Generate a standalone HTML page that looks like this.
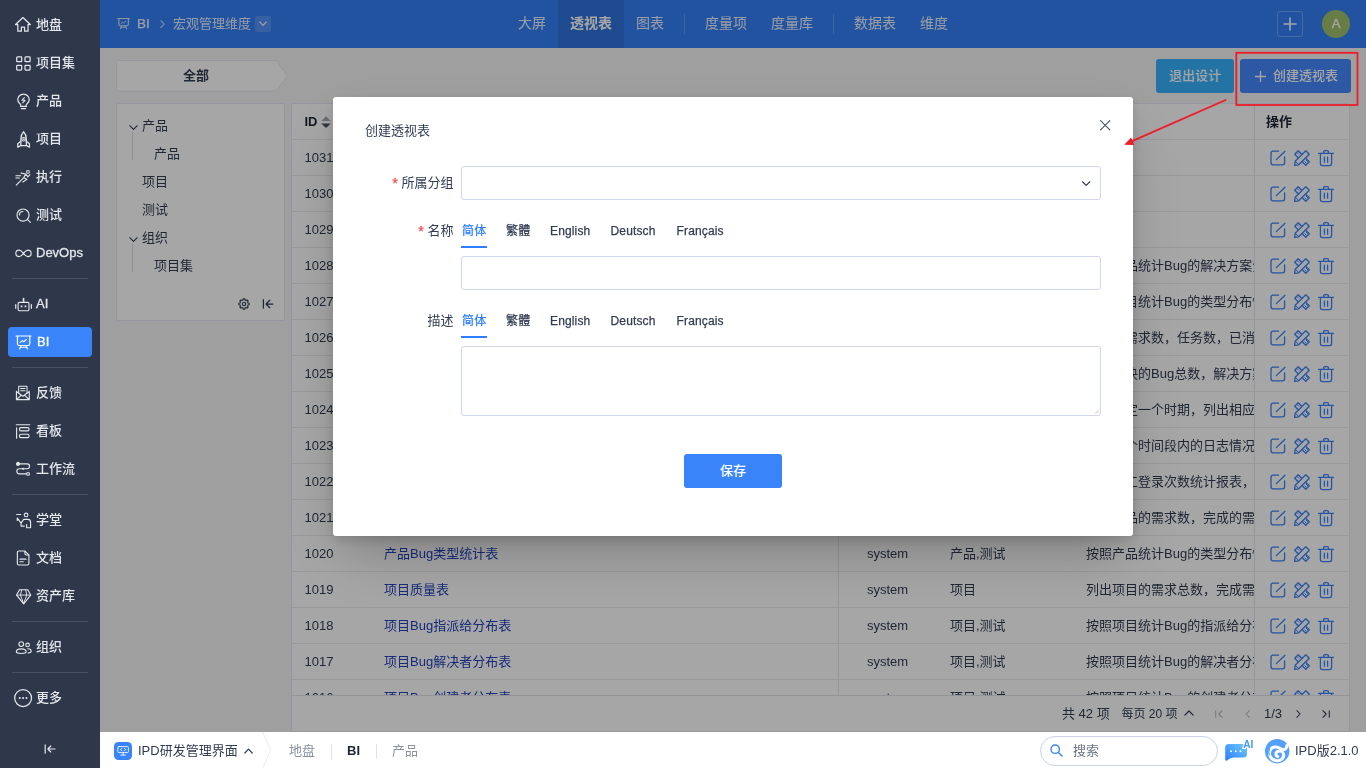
<!DOCTYPE html>
<html lang="zh-CN">
<head>
<meta charset="utf-8">
<title>BI - 透视表</title>
<style>
*{box-sizing:border-box;margin:0;padding:0}
html,body{width:1366px;height:768px;overflow:hidden}
body{position:relative;font-family:"Liberation Sans","Noto Sans CJK SC",sans-serif;font-size:13px;color:#313c52;background:#f4f5f5}
.abs{position:absolute}
#side,#hd,#main,#modal,#ft{filter:grayscale(0)}
svg{display:block;overflow:visible}
/* ---------- sidebar ---------- */
#side{position:absolute;left:0;top:0;width:100px;height:768px;background:#2f384a;z-index:30}
#side .it{position:absolute;left:8px;width:84px;height:30px;border-radius:4px;color:#e4e7ec;font-size:13px;font-weight:500;line-height:30px;white-space:nowrap}
#side .it svg{position:absolute;left:6.500px;top:6.500px;width:17px;height:17px;fill:none;stroke:#e4e7ec;stroke-width:1.3;stroke-linecap:round;stroke-linejoin:round}
#side .it span{position:absolute;left:28px;top:0}
#side .it.on{background:#3a84fa;color:#fff}
#side .it.on svg{stroke:#fff}
#side .dv{position:absolute;left:12px;width:76px;height:1px;background:#485062}
/* ---------- header ---------- */
#hd{position:absolute;left:100px;top:0;width:1266px;height:48px;background:#3480f6;color:#fff;z-index:1}
#hd .nav{position:absolute;top:0;height:48px;line-height:47px;font-size:14px;color:rgba(255,255,255,.9);white-space:nowrap}
#hd .nav.on{font-weight:bold;color:#fff}
#hd .navbg{position:absolute;top:0;height:48px;background:rgba(0,0,0,.1)}
#hd .sep{position:absolute;top:14px;width:1px;height:20px;background:rgba(255,255,255,.22)}

/* ---------- main ---------- */
#main{position:absolute;left:100px;top:48px;width:1266px;height:684px;z-index:1}
.panel{position:absolute;background:#fff;border:1px solid #e4e9f4;border-radius:2px}
.tr{position:absolute;left:0;width:1058px;height:36px;border-bottom:1px solid #e9ebf1;line-height:35px;white-space:nowrap;overflow:hidden}
.tr span{position:absolute;top:0}
.tr a{position:absolute;top:0;color:#2442b9;text-decoration:none}
.tr .d{left:794px;width:168px;overflow:hidden}
.tr svg{position:absolute;top:10px;fill:none;stroke:#3a84fa;stroke-width:1.300;stroke-linecap:round;stroke-linejoin:round}
.tree{position:absolute;line-height:28px;white-space:nowrap}
.pg{position:absolute;top:0;line-height:36px;white-space:nowrap}
/* ---------- overlay ---------- */
#mask{position:absolute;left:100px;top:0;width:1266px;height:732px;background:rgba(0,0,0,.35);z-index:10}

#modal .lb{position:absolute;left:0;width:120.500px;text-align:right;white-space:nowrap;line-height:20px}
#modal .lb i{color:#f4524d;font-style:normal;margin-right:3.500px;font-size:14.500px;line-height:10px;position:relative;top:1px;-webkit-text-stroke:.3px #f4524d}
#modal .inp{position:absolute;left:128px;width:640px;border:1px solid #d0d6ec;border-radius:3px;background:#fff}
#modal .tab{position:absolute;font-size:12px;line-height:20px;color:#313c52;white-space:nowrap;-webkit-text-stroke:.25px currentColor;letter-spacing:.15px}
#modal .tab.on{color:#2e7fff}
#modal .ul{position:absolute;left:128px;width:26px;height:2px;background:#2e7fff}
/* ---------- bottom bar ---------- */
#ft{position:absolute;left:100px;top:732px;width:1266px;height:36px;background:#fff;z-index:30;font-size:13px}
/* ---------- modal ---------- */
#modal{position:absolute;left:333px;top:97px;width:800px;height:439px;background:#fff;border-radius:3px;z-index:20;box-shadow:0 25px 50px -12px rgba(0,0,0,.25),0 4px 12px rgba(0,0,0,.14)}
</style>
</head>
<body>

<div id="side">
<div class="it" style="top:10px"><svg viewBox="0 0 18 18"><path transform="translate(-.6 -1)" d="M9 1.600 1.200 9h2.400v7h3.700v-4.200h3.400V16h3.700V9h2.400z"/></svg><span>地盘</span></div>
<div class="it" style="top:48px"><svg viewBox="0 0 18 18"><rect x="1.800" y="2.100" width="5.300" height="5" rx=".8"/><rect x="10.600" y="2.100" width="5.400" height="5" rx=".8"/><rect x="1.800" y="10.900" width="5.300" height="5.100" rx=".8"/><rect x="10.600" y="10.900" width="5.400" height="5.100" rx=".8"/></svg><span>项目集</span></div>
<div class="it" style="top:86px"><svg viewBox="0 0 18 18"><path d="M6.200 13c0-1.500-3.300-2.700-3.300-5.800a6.100 6.100 0 0 1 12.200 0c0 3.100-3.300 4.300-3.300 5.800"/><path d="M5.800 14.200h6.400M6.800 16.600h4.400"/><path d="M9.900 4.900 7.300 7.700h3.400L8.100 10.500" stroke-width="1.100"/></svg><span>产品</span></div>
<div class="it" style="top:124px"><svg viewBox="0 0 18 18"><path d="M9.100.8C7 3 6.200 5.600 6.200 8.500v6.900h5.800V8.500c0-2.900-.8-5.500-2.900-7.700z"/><path d="M6.200 10.900 2.900 13.400v3.800l3.300-2M12 10.900l3.300 2.500v3.800l-3.300-2" /><circle cx="9.100" cy="8.700" r="1.900" stroke-width="1.100"/><circle cx="9.100" cy="8.700" r=".4" stroke-width=".8"/></svg><span>项目</span></div>
<div class="it" style="top:162px"><svg viewBox="0 0 18 18"><circle cx="13.700" cy="3.100" r="1.500" stroke-width="1.100"/><path d="M6.400 4.400 11.400 5.300 9.300 9.100 12.600 11 8.400 13.800M9.300 9.100 1.300 17.100M11.400 5.300 13.600 8.300 15.800 6" stroke-width="1.200"/><path d="M.9 7.100h5.200M.9 9.500h3.800" stroke-width="1.100"/></svg><span>执行</span></div>
<div class="it" style="top:200px"><svg viewBox="0 0 18 18"><circle cx="8.500" cy="8.500" r="6.400" stroke-width="1.200"/><path d="M13.100 13.100 16.300 16.200M4.700 8.500a3.800 3.800 0 0 1 3.700-3.700" stroke-width="1.200"/></svg><span>测试</span></div>
<div class="it" style="top:238px"><svg viewBox="0 0 18 18"><path d="M9 8.850C7.400 6.400 6 5.400 4.300 5.400a3.450 3.450 0 0 0 0 6.900c1.700 0 3.100-1 4.700-3.450zm0 0c1.600 2.450 3 3.450 4.700 3.450a3.450 3.450 0 0 0 0-6.900c-1.700 0-3.100 1-4.700 3.450z" stroke-width="1.150"/></svg><span style="-webkit-text-stroke:.3px currentColor">DevOps</span></div>
<div class="it" style="top:289px"><svg viewBox="0 0 18 18"><rect x="3.300" y="6.800" width="11.500" height="8.800" rx="1.300" stroke-width="1.200"/><path d="M9.050 6.600V2" stroke-width="1.700" stroke-linecap="butt"/><path d="M.8 9.200v3.800M17.300 9.200v3.800" stroke-width="1.300"/><path d="M6.100 10.900h1.800M10.200 10.900h1.800" stroke-width="1.800" stroke-linecap="butt"/></svg><span style="-webkit-text-stroke:.3px currentColor">AI</span></div>
<div class="it on" style="top:327px"><svg viewBox="0 0 18 18"><path d="M1.100 2.100h15.900M2.600 2.300v7.900a2 2 0 0 0 2 2h9.100a2 2 0 0 0 2-2V2.300M4.900 15.800l1.300-3.400M13.200 15.800l-1.300-3.400M5.700 14h6.700" stroke-width="1.250"/><path d="M5.500 8.900 7.900 7.100l1.400 1.100 2.800-2.400" stroke-width="1.100"/></svg><span style="left:29px;-webkit-text-stroke:.3px currentColor">BI</span></div>
<div class="it" style="top:378px"><svg viewBox="0 0 18 18"><g transform="translate(0 -.7)"><path d="M1.500 7.400v8.800h13.600V7.400M1.600 16.100 6.700 11.500M15 16.100 9.900 11.500M1.500 7.500 8.300 12.600l6.800-5.100" stroke-width="1.200"/><path d="M3.900 8.900V2h8.800v6.900M6 4.500h4.600M6 6.700h4.600" stroke-width="1.100"/></g></svg><span>反馈</span></div>
<div class="it" style="top:416px"><svg viewBox="0 0 18 18"><path d="M1.400 1.900h14.200M1.700 5v11.200" stroke-width="1.200"/><rect x="4.800" y="4.900" width="10" height="3.500" rx="1.300" stroke-width="1.200"/><rect x="4.800" y="11.900" width="10" height="3.600" rx="1.300" stroke-width="1.200"/></svg><span>看板</span></div>
<div class="it" style="top:454px"><svg viewBox="0 0 18 18"><g transform="translate(0 -.75)"><circle cx="3.200" cy="3.800" r="1.500" fill="#e4e7ec"/><circle cx="13.800" cy="14.400" r="1.500" stroke-width="1.200"/><path d="M5 3.800h7.800a2.600 2.600 0 0 1 0 5.200H4.600a2.700 2.700 0 0 0 0 5.400h7.600" stroke-width="1.200"/><circle cx="8.600" cy="9" r="1.100" fill="#e4e7ec" stroke="none"/></g></svg><span>工作流</span></div>
<div class="it" style="top:505px"><svg viewBox="0 0 18 18"><circle cx="11.700" cy="3.100" r="1.900" stroke-width="1.200"/><path d="M1.800 2.600h4.200M2.500 6.400 6.400 11.800 9.200 7.800h4.300a3 3 0 0 1 3 3v5.900h-4.200v-3.400M2.400 6.300v2.600M6.400 11.800v3.100h3.400" stroke-width="1.200"/></svg><span>学堂</span></div>
<div class="it" style="top:543px"><svg viewBox="0 0 18 18"><g transform="translate(-.5 -.5)"><path d="M3 3.100a1.500 1.500 0 0 1 1.500-1.500h6.500l4.200 4.200v9.100a1.500 1.500 0 0 1-1.500 1.500h-9.200a1.500 1.500 0 0 1-1.500-1.500z" stroke-width="1.200"/><path d="M11 1.800v2.500a1.500 1.500 0 0 0 1.500 1.500h2.500M5.800 10.200h6.400M5.800 13h3.400" stroke-width="1.200"/></g></svg><span>文档</span></div>
<div class="it" style="top:581px"><svg viewBox="0 0 18 18"><path d="M4.800 1.900h8.700l3.100 5.600-7.450 9.300L1.700 7.500z" stroke-width="1.200"/><path d="M1.900 7.500h14.500M7 2.100 5.800 7.500l3.350 9M11.300 2.100l1.200 5.400-3.350 9" stroke-width="1"/></svg><span>资产库</span></div>
<div class="it" style="top:632px"><svg viewBox="0 0 18 18"><circle cx="6.600" cy="5.400" r="2.500" stroke-width="1.200"/><path d="M1.400 13.600c0-2.100 2.300-3.200 5.200-3.200s5.200 1.100 5.200 3.200c0 1.100-2.300 1.700-5.200 1.700s-5.200-.6-5.200-1.700z" stroke-width="1.200"/><circle cx="13.300" cy="6.300" r="1.900" stroke-width="1.200"/><path d="M13.400 10.300c2.200 0 3.800 1 3.800 2.800 0 1-1.300 1.500-3.200 1.600" stroke-width="1.200"/></svg><span>组织</span></div>
<div class="it" style="top:683px"><svg viewBox="0 0 18 18" style="left:5.900px;top:5.900px;width:18.200px;height:18.200px"><circle cx="9" cy="9" r="8.350" stroke-width="1.250"/><path d="M5.700 9h.01M9 9h.01M12.300 9h.01" stroke-width="2"/></svg><span>更多</span></div>
<div class="dv" style="top:278px"></div>
<div class="dv" style="top:367px"></div>
<div class="dv" style="top:494px"></div>
<div class="dv" style="top:621px"></div>
<div class="dv" style="top:672px"></div>
<svg class="abs" style="left:43.800px;top:743.800px" width="12" height="10" viewBox="0 0 14 12" fill="none" stroke="#e4e7ec" stroke-width="1.400" stroke-linecap="round" stroke-linejoin="round"><path d="M1.200 1v10M13 6H4.600M8 2.400 4.400 6 8 9.600"/></svg>
</div>
<div id="hd">
<svg class="abs" style="left:17px;top:17px" width="13" height="13" viewBox="0 0 18 18" fill="none" stroke="rgba(255,255,255,.8)" stroke-width="1.500" stroke-linecap="round" stroke-linejoin="round"><path d="M1.100 2.100h15.900M2.600 2.300v7.900a2 2 0 0 0 2 2h9.100a2 2 0 0 0 2-2V2.300M4.900 16.200l1.300-3.800M13.200 16.200l-1.300-3.800M5.700 14.200h6.700"/><path d="M5.500 8.900 7.900 7.100l1.400 1.100 2.800-2.400" stroke-width="1.200"/></svg>
<div class="nav" style="left:37px;font-size:13.500px;color:rgba(255,255,255,.88);-webkit-text-stroke:.25px rgba(255,255,255,.88)">BI</div>
<svg class="abs" style="left:59.500px;top:20px" width="5" height="8.300" viewBox="0 0 6 10" fill="none" stroke="rgba(255,255,255,.6)" stroke-width="1.600" stroke-linecap="round" stroke-linejoin="round"><path d="M1 1l4 4-4 4"/></svg>
<div class="nav" style="left:73px;font-size:13px;color:rgba(255,255,255,.88)">宏观管理维度</div>
<div class="abs" style="left:155px;top:16px;width:16px;height:16px;border-radius:2px;background:rgba(255,255,255,.16)"></div>
<svg class="abs" style="left:159px;top:21px" width="8" height="6" viewBox="0 0 8 6" fill="none" stroke="rgba(255,255,255,.9)" stroke-width="1.200" stroke-linecap="round" stroke-linejoin="round"><path d="M.8 1l3.200 3.400L7.200 1"/></svg>
<div class="navbg" style="left:458px;width:66px"></div>
<div class="nav" style="left:418px">大屏</div>
<div class="nav on" style="left:470px">透视表</div>
<div class="nav" style="left:536px">图表</div>
<div class="sep" style="left:584px"></div>
<div class="nav" style="left:605px">度量项</div>
<div class="nav" style="left:671px">度量库</div>
<div class="sep" style="left:733px"></div>
<div class="nav" style="left:754px">数据表</div>
<div class="nav" style="left:820px">维度</div>
<div class="abs" style="left:1177px;top:11px;width:26px;height:26px;border:1px solid rgba(255,255,255,.28);border-radius:3px"></div>
<svg class="abs" style="left:1183px;top:17px" width="14" height="14" viewBox="0 0 14 14" fill="none" stroke="#fff" stroke-width="1.600" stroke-linecap="butt"><path d="M7 .5v13M.5 7h13"/></svg>
<div class="abs" style="left:1222px;top:10px;width:28px;height:28px;border-radius:14px;background:#a0c06c;color:#fff;font-size:13px;line-height:27px;text-align:center;-webkit-text-stroke:.3px #fff">A</div>
</div>
<div id="main">
<!-- 全部 tab -->
<svg class="abs" style="left:16px;top:12px" width="173" height="32" viewBox="0 0 173 32"><path d="M2.500.5h157.500l11.500 15.250-11.500 15.250H2.500a2 2 0 0 1-2-2V2.500a2 2 0 0 1 2-2z" fill="#fff" stroke="#e4e9f4"/></svg>
<div class="abs" style="left:16px;top:12px;width:160px;height:31px;line-height:31px;text-align:center;font-weight:bold;font-size:13px">全部</div>
<!-- buttons -->
<div class="abs" style="left:1056px;top:11px;width:78px;height:34px;border-radius:3px;background:#37b2fe;color:#fff;line-height:33px;text-align:center;font-weight:500">退出设计</div>
<div class="abs" style="left:1140px;top:11px;width:111px;height:34px;border-radius:3px;background:#4588fb;color:#fff;line-height:33px"><svg class="abs" style="left:15px;top:12px" width="11" height="11" viewBox="0 0 11 11" fill="none" stroke="#fff" stroke-width="1.300"><path d="M5.500 0v11M0 5.500h11"/></svg><span class="abs" style="left:33px;top:0;font-weight:500">创建透视表</span></div>
<!-- tree panel -->
<div class="panel" style="left:16px;top:55px;width:169px;height:218px"><div class="abs" style="left:0;top:1px">
<svg class="abs" style="left:11.500px;top:19.500px" width="9" height="5.400" viewBox="0 0 10 6" fill="none" stroke="#313c52" stroke-width="1.200" stroke-linecap="round" stroke-linejoin="round"><path d="M.8.800 5 5 9.200.8"/></svg>
<div class="abs" style="left:15px;top:27px;width:1px;height:28px;background:#d8dbe3"></div>
<div class="tree" style="left:25px;top:7px">产品</div>
<div class="tree" style="left:37px;top:35px">产品</div>
<div class="tree" style="left:25px;top:63px">项目</div>
<div class="tree" style="left:25px;top:91px">测试</div>
<svg class="abs" style="left:11.500px;top:131.500px" width="9" height="5.400" viewBox="0 0 10 6" fill="none" stroke="#313c52" stroke-width="1.200" stroke-linecap="round" stroke-linejoin="round"><path d="M.8.800 5 5 9.200.8"/></svg>
<div class="abs" style="left:15px;top:139px;width:1px;height:28px;background:#d8dbe3"></div>
<div class="tree" style="left:25px;top:119px">组织</div>
<div class="tree" style="left:37px;top:147px">项目集</div>
<svg class="abs" style="left:121px;top:193.100px" width="12" height="12" viewBox="0 0 12 12" fill="none" stroke="#313c52" stroke-width="1.100" stroke-linejoin="round"><path d="M5.19 0.91 6.81 0.91 7.02 2.03 8.09 2.47 9.03 1.83 10.17 2.97 9.53 3.91 9.97 4.98 11.09 5.19 11.09 6.81 9.97 7.02 9.53 8.09 10.17 9.03 9.03 10.17 8.09 9.53 7.02 9.97 6.81 11.09 5.19 11.09 4.98 9.97 3.91 9.53 2.97 10.17 1.83 9.03 2.47 8.09 2.03 7.02 0.91 6.81 0.91 5.19 2.03 4.98 2.47 3.91 1.83 2.97 2.97 1.83 3.91 2.47 4.98 2.03z"/><circle cx="6" cy="6" r="1.700"/></svg>
<svg class="abs" style="left:145px;top:194px" width="12" height="10" viewBox="0 0 12 10" fill="none" stroke="#313c52" stroke-width="1.250" stroke-linecap="round" stroke-linejoin="round"><path d="M1.400.7v8.300M10.900 5H4M7.800 1.300 4 5l3.800 3.700"/></svg>
</div></div>
<!-- table -->
<div class="panel" style="left:191px;top:55px;width:1059px;height:629px;border-radius:2px;overflow:hidden">
<div class="abs" style="left:0;top:0;width:1058px;height:592px;overflow:hidden">
<div class="tr" style="top:0;font-weight:bold;color:#1d2432"><span style="left:12.500px">ID</span><svg style="left:28.700px;top:12px;stroke:none" width="10" height="12.500" viewBox="0 0 9 12" preserveAspectRatio="none"><path d="M4.500.200 8.800 4.800H.2z" fill="#a3a9b5"/><path d="M4.500 11.400 8.800 7.200H.2z" fill="#4a5365"/></svg><span style="left:92px">名称</span><span style="left:575px">创建者</span><span style="left:658px">所属分组</span><span style="left:794px">描述</span><span style="left:974px">操作</span></div>
<div class="tr" style="top:36px"><span style="left:12.500px">1031</span><a style="left:92px">项目任务进度透视表</a><span style="left:575px">admin</span><span style="left:658px">项目</span><span class="d"></span><svg style="left:978px" width="16" height="16" viewBox="0 0 16 16"><path d="M8.600 1.200H3a2 2 0 0 0-2 2v9.600a2 2 0 0 0 2 2h9.600a2 2 0 0 0 2-2V6.800"/><path d="M6.400 9.600 15 1.200"/></svg><svg style="left:1002px" width="16" height="16" viewBox="0 0 16 16"><path d="M4.200.700.700 4.200 11.800 15.300 15.300 11.800z"/><path d="M3.400 2.900 4.700 4.200M5.200 1.900 6.500 3.200M10.900 11.800 12.200 13.100M12.200 10.200 13.500 11.500" stroke-width="1"/><path d="M11.800.700 15.300 4.200 4.700 14.800.600 15.400 1.200 11.300z" fill="#fff"/><path d="M1.400 11.300 4.700 14.600" stroke-width="1"/></svg><svg style="left:1026px" width="16" height="16" viewBox="0 0 16 16"><path d="M.600 3.400h14.800M5.600 3.200V1.600a1 1 0 0 1 1-1h2.800a1 1 0 0 1 1 1v1.600M2.400 3.600v10a2 2 0 0 0 2 2h7.200a2 2 0 0 0 2-2v-10M6.400 7.200v5M9.600 7.200v5"/></svg></div>
<div class="tr" style="top:72px"><span style="left:12.500px">1030</span><a style="left:92px">产品需求阶段透视表</a><span style="left:575px">admin</span><span style="left:658px">产品</span><span class="d"></span><svg style="left:978px" width="16" height="16" viewBox="0 0 16 16"><path d="M8.600 1.200H3a2 2 0 0 0-2 2v9.600a2 2 0 0 0 2 2h9.600a2 2 0 0 0 2-2V6.800"/><path d="M6.400 9.600 15 1.200"/></svg><svg style="left:1002px" width="16" height="16" viewBox="0 0 16 16"><path d="M4.200.700.700 4.200 11.800 15.300 15.300 11.800z"/><path d="M3.400 2.900 4.700 4.200M5.200 1.900 6.500 3.200M10.900 11.800 12.200 13.100M12.200 10.200 13.500 11.500" stroke-width="1"/><path d="M11.800.700 15.300 4.200 4.700 14.800.600 15.400 1.200 11.300z" fill="#fff"/><path d="M1.400 11.300 4.700 14.600" stroke-width="1"/></svg><svg style="left:1026px" width="16" height="16" viewBox="0 0 16 16"><path d="M.600 3.400h14.800M5.600 3.200V1.600a1 1 0 0 1 1-1h2.800a1 1 0 0 1 1 1v1.600M2.400 3.600v10a2 2 0 0 0 2 2h7.200a2 2 0 0 0 2-2v-10M6.400 7.200v5M9.600 7.200v5"/></svg></div>
<div class="tr" style="top:108px"><span style="left:12.500px">1029</span><a style="left:92px">测试用例执行透视表</a><span style="left:575px">admin</span><span style="left:658px">测试</span><span class="d"></span><svg style="left:978px" width="16" height="16" viewBox="0 0 16 16"><path d="M8.600 1.200H3a2 2 0 0 0-2 2v9.600a2 2 0 0 0 2 2h9.600a2 2 0 0 0 2-2V6.800"/><path d="M6.400 9.600 15 1.200"/></svg><svg style="left:1002px" width="16" height="16" viewBox="0 0 16 16"><path d="M4.200.700.700 4.200 11.800 15.300 15.300 11.800z"/><path d="M3.400 2.900 4.700 4.200M5.200 1.900 6.500 3.200M10.900 11.800 12.200 13.100M12.200 10.200 13.500 11.500" stroke-width="1"/><path d="M11.800.700 15.300 4.200 4.700 14.800.600 15.400 1.200 11.300z" fill="#fff"/><path d="M1.400 11.300 4.700 14.600" stroke-width="1"/></svg><svg style="left:1026px" width="16" height="16" viewBox="0 0 16 16"><path d="M.600 3.400h14.800M5.600 3.200V1.600a1 1 0 0 1 1-1h2.800a1 1 0 0 1 1 1v1.600M2.400 3.600v10a2 2 0 0 0 2 2h7.200a2 2 0 0 0 2-2v-10M6.400 7.200v5M9.600 7.200v5"/></svg></div>
<div class="tr" style="top:144px"><span style="left:12.500px">1028</span><a style="left:92px">产品Bug解决方案统计表</a><span style="left:575px">system</span><span style="left:658px">产品,测试</span><span class="d">按照产品统计Bug的解决方案分布情况</span><svg style="left:978px" width="16" height="16" viewBox="0 0 16 16"><path d="M8.600 1.200H3a2 2 0 0 0-2 2v9.600a2 2 0 0 0 2 2h9.600a2 2 0 0 0 2-2V6.800"/><path d="M6.400 9.600 15 1.200"/></svg><svg style="left:1002px" width="16" height="16" viewBox="0 0 16 16"><path d="M4.200.700.700 4.200 11.800 15.300 15.300 11.800z"/><path d="M3.400 2.900 4.700 4.200M5.200 1.900 6.500 3.200M10.900 11.800 12.200 13.100M12.200 10.200 13.500 11.500" stroke-width="1"/><path d="M11.800.700 15.300 4.200 4.700 14.800.600 15.400 1.200 11.300z" fill="#fff"/><path d="M1.400 11.300 4.700 14.600" stroke-width="1"/></svg><svg style="left:1026px" width="16" height="16" viewBox="0 0 16 16"><path d="M.600 3.400h14.800M5.600 3.200V1.600a1 1 0 0 1 1-1h2.800a1 1 0 0 1 1 1v1.600M2.400 3.600v10a2 2 0 0 0 2 2h7.200a2 2 0 0 0 2-2v-10M6.400 7.200v5M9.600 7.200v5"/></svg></div>
<div class="tr" style="top:180px"><span style="left:12.500px">1027</span><a style="left:92px">项目Bug类型统计表</a><span style="left:575px">system</span><span style="left:658px">项目,测试</span><span class="d">按照项目统计Bug的类型分布情况</span><svg style="left:978px" width="16" height="16" viewBox="0 0 16 16"><path d="M8.600 1.200H3a2 2 0 0 0-2 2v9.600a2 2 0 0 0 2 2h9.600a2 2 0 0 0 2-2V6.800"/><path d="M6.400 9.600 15 1.200"/></svg><svg style="left:1002px" width="16" height="16" viewBox="0 0 16 16"><path d="M4.200.700.700 4.200 11.800 15.300 15.300 11.800z"/><path d="M3.400 2.900 4.700 4.200M5.200 1.900 6.500 3.200M10.900 11.800 12.200 13.100M12.200 10.200 13.500 11.500" stroke-width="1"/><path d="M11.800.700 15.300 4.200 4.700 14.800.600 15.400 1.200 11.300z" fill="#fff"/><path d="M1.400 11.300 4.700 14.600" stroke-width="1"/></svg><svg style="left:1026px" width="16" height="16" viewBox="0 0 16 16"><path d="M.600 3.400h14.800M5.600 3.200V1.600a1 1 0 0 1 1-1h2.800a1 1 0 0 1 1 1v1.600M2.400 3.600v10a2 2 0 0 0 2 2h7.200a2 2 0 0 0 2-2v-10M6.400 7.200v5M9.600 7.200v5"/></svg></div>
<div class="tr" style="top:216px"><span style="left:12.500px">1026</span><a style="left:92px">项目进展表</a><span style="left:575px">system</span><span style="left:658px">项目</span><span class="d">项目的需求数，任务数，已消耗工时</span><svg style="left:978px" width="16" height="16" viewBox="0 0 16 16"><path d="M8.600 1.200H3a2 2 0 0 0-2 2v9.600a2 2 0 0 0 2 2h9.600a2 2 0 0 0 2-2V6.800"/><path d="M6.400 9.600 15 1.200"/></svg><svg style="left:1002px" width="16" height="16" viewBox="0 0 16 16"><path d="M4.200.700.700 4.200 11.800 15.300 15.300 11.800z"/><path d="M3.400 2.900 4.700 4.200M5.200 1.900 6.500 3.200M10.900 11.800 12.200 13.100M12.200 10.200 13.500 11.500" stroke-width="1"/><path d="M11.800.700 15.300 4.200 4.700 14.800.600 15.400 1.200 11.300z" fill="#fff"/><path d="M1.400 11.300 4.700 14.600" stroke-width="1"/></svg><svg style="left:1026px" width="16" height="16" viewBox="0 0 16 16"><path d="M.600 3.400h14.800M5.600 3.200V1.600a1 1 0 0 1 1-1h2.800a1 1 0 0 1 1 1v1.600M2.400 3.600v10a2 2 0 0 0 2 2h7.200a2 2 0 0 0 2-2v-10M6.400 7.200v5M9.600 7.200v5"/></svg></div>
<div class="tr" style="top:252px"><span style="left:12.500px">1025</span><a style="left:92px">Bug解决表</a><span style="left:575px">system</span><span style="left:658px">测试</span><span class="d">列出解决的Bug总数，解决方案分布</span><svg style="left:978px" width="16" height="16" viewBox="0 0 16 16"><path d="M8.600 1.200H3a2 2 0 0 0-2 2v9.600a2 2 0 0 0 2 2h9.600a2 2 0 0 0 2-2V6.800"/><path d="M6.400 9.600 15 1.200"/></svg><svg style="left:1002px" width="16" height="16" viewBox="0 0 16 16"><path d="M4.200.700.700 4.200 11.800 15.300 15.300 11.800z"/><path d="M3.400 2.900 4.700 4.200M5.200 1.900 6.500 3.200M10.900 11.800 12.200 13.100M12.200 10.200 13.500 11.500" stroke-width="1"/><path d="M11.800.700 15.300 4.200 4.700 14.800.600 15.400 1.200 11.300z" fill="#fff"/><path d="M1.400 11.300 4.700 14.600" stroke-width="1"/></svg><svg style="left:1026px" width="16" height="16" viewBox="0 0 16 16"><path d="M.600 3.400h14.800M5.600 3.200V1.600a1 1 0 0 1 1-1h2.800a1 1 0 0 1 1 1v1.600M2.400 3.600v10a2 2 0 0 0 2 2h7.200a2 2 0 0 0 2-2v-10M6.400 7.200v5M9.600 7.200v5"/></svg></div>
<div class="tr" style="top:288px"><span style="left:12.500px">1024</span><a style="left:92px">Bug创建表</a><span style="left:575px">system</span><span style="left:658px">测试</span><span class="d">可以指定一个时期，列出相应的Bug</span><svg style="left:978px" width="16" height="16" viewBox="0 0 16 16"><path d="M8.600 1.200H3a2 2 0 0 0-2 2v9.600a2 2 0 0 0 2 2h9.600a2 2 0 0 0 2-2V6.800"/><path d="M6.400 9.600 15 1.200"/></svg><svg style="left:1002px" width="16" height="16" viewBox="0 0 16 16"><path d="M4.200.700.700 4.200 11.800 15.300 15.300 11.800z"/><path d="M3.400 2.900 4.700 4.200M5.200 1.900 6.500 3.200M10.900 11.800 12.200 13.100M12.200 10.200 13.500 11.500" stroke-width="1"/><path d="M11.800.700 15.300 4.200 4.700 14.800.600 15.400 1.200 11.300z" fill="#fff"/><path d="M1.400 11.300 4.700 14.600" stroke-width="1"/></svg><svg style="left:1026px" width="16" height="16" viewBox="0 0 16 16"><path d="M.600 3.400h14.800M5.600 3.200V1.600a1 1 0 0 1 1-1h2.800a1 1 0 0 1 1 1v1.600M2.400 3.600v10a2 2 0 0 0 2 2h7.200a2 2 0 0 0 2-2v-10M6.400 7.200v5M9.600 7.200v5"/></svg></div>
<div class="tr" style="top:324px"><span style="left:12.500px">1023</span><a style="left:92px">日志汇总表</a><span style="left:575px">system</span><span style="left:658px">组织</span><span class="d">查看某个时间段内的日志情况</span><svg style="left:978px" width="16" height="16" viewBox="0 0 16 16"><path d="M8.600 1.200H3a2 2 0 0 0-2 2v9.600a2 2 0 0 0 2 2h9.600a2 2 0 0 0 2-2V6.800"/><path d="M6.400 9.600 15 1.200"/></svg><svg style="left:1002px" width="16" height="16" viewBox="0 0 16 16"><path d="M4.200.700.700 4.200 11.800 15.300 15.300 11.800z"/><path d="M3.400 2.900 4.700 4.200M5.200 1.900 6.500 3.200M10.900 11.800 12.200 13.100M12.200 10.200 13.500 11.500" stroke-width="1"/><path d="M11.800.700 15.300 4.200 4.700 14.800.600 15.400 1.200 11.300z" fill="#fff"/><path d="M1.400 11.300 4.700 14.600" stroke-width="1"/></svg><svg style="left:1026px" width="16" height="16" viewBox="0 0 16 16"><path d="M.600 3.400h14.800M5.600 3.200V1.600a1 1 0 0 1 1-1h2.800a1 1 0 0 1 1 1v1.600M2.400 3.600v10a2 2 0 0 0 2 2h7.200a2 2 0 0 0 2-2v-10M6.400 7.200v5M9.600 7.200v5"/></svg></div>
<div class="tr" style="top:360px"><span style="left:12.500px">1022</span><a style="left:92px">员工登录次数统计表</a><span style="left:575px">system</span><span style="left:658px">组织</span><span class="d">公司员工登录次数统计报表，</span><svg style="left:978px" width="16" height="16" viewBox="0 0 16 16"><path d="M8.600 1.200H3a2 2 0 0 0-2 2v9.600a2 2 0 0 0 2 2h9.600a2 2 0 0 0 2-2V6.800"/><path d="M6.400 9.600 15 1.200"/></svg><svg style="left:1002px" width="16" height="16" viewBox="0 0 16 16"><path d="M4.200.700.700 4.200 11.800 15.300 15.300 11.800z"/><path d="M3.400 2.900 4.700 4.200M5.200 1.900 6.500 3.200M10.900 11.800 12.200 13.100M12.200 10.200 13.500 11.500" stroke-width="1"/><path d="M11.800.700 15.300 4.200 4.700 14.800.600 15.400 1.200 11.300z" fill="#fff"/><path d="M1.400 11.300 4.700 14.600" stroke-width="1"/></svg><svg style="left:1026px" width="16" height="16" viewBox="0 0 16 16"><path d="M.600 3.400h14.800M5.600 3.200V1.600a1 1 0 0 1 1-1h2.800a1 1 0 0 1 1 1v1.600M2.400 3.600v10a2 2 0 0 0 2 2h7.200a2 2 0 0 0 2-2v-10M6.400 7.200v5M9.600 7.200v5"/></svg></div>
<div class="tr" style="top:396px"><span style="left:12.500px">1021</span><a style="left:92px">产品汇总表</a><span style="left:575px">system</span><span style="left:658px">产品</span><span class="d">列出产品的需求数，完成的需求数</span><svg style="left:978px" width="16" height="16" viewBox="0 0 16 16"><path d="M8.600 1.200H3a2 2 0 0 0-2 2v9.600a2 2 0 0 0 2 2h9.600a2 2 0 0 0 2-2V6.800"/><path d="M6.400 9.600 15 1.200"/></svg><svg style="left:1002px" width="16" height="16" viewBox="0 0 16 16"><path d="M4.200.700.700 4.200 11.800 15.300 15.300 11.800z"/><path d="M3.400 2.900 4.700 4.200M5.200 1.900 6.500 3.200M10.900 11.800 12.200 13.100M12.200 10.200 13.500 11.500" stroke-width="1"/><path d="M11.800.700 15.300 4.200 4.700 14.800.600 15.400 1.200 11.300z" fill="#fff"/><path d="M1.400 11.300 4.700 14.600" stroke-width="1"/></svg><svg style="left:1026px" width="16" height="16" viewBox="0 0 16 16"><path d="M.600 3.400h14.800M5.600 3.200V1.600a1 1 0 0 1 1-1h2.800a1 1 0 0 1 1 1v1.600M2.400 3.600v10a2 2 0 0 0 2 2h7.200a2 2 0 0 0 2-2v-10M6.400 7.200v5M9.600 7.200v5"/></svg></div>
<div class="tr" style="top:432px"><span style="left:12.500px">1020</span><a style="left:92px">产品Bug类型统计表</a><span style="left:575px">system</span><span style="left:658px">产品,测试</span><span class="d">按照产品统计Bug的类型分布情况</span><svg style="left:978px" width="16" height="16" viewBox="0 0 16 16"><path d="M8.600 1.200H3a2 2 0 0 0-2 2v9.600a2 2 0 0 0 2 2h9.600a2 2 0 0 0 2-2V6.800"/><path d="M6.400 9.600 15 1.200"/></svg><svg style="left:1002px" width="16" height="16" viewBox="0 0 16 16"><path d="M4.200.700.700 4.200 11.800 15.300 15.300 11.800z"/><path d="M3.400 2.900 4.700 4.200M5.200 1.900 6.500 3.200M10.900 11.800 12.200 13.100M12.200 10.200 13.500 11.500" stroke-width="1"/><path d="M11.800.700 15.300 4.200 4.700 14.800.600 15.400 1.200 11.300z" fill="#fff"/><path d="M1.400 11.300 4.700 14.600" stroke-width="1"/></svg><svg style="left:1026px" width="16" height="16" viewBox="0 0 16 16"><path d="M.600 3.400h14.800M5.600 3.200V1.600a1 1 0 0 1 1-1h2.800a1 1 0 0 1 1 1v1.600M2.400 3.600v10a2 2 0 0 0 2 2h7.200a2 2 0 0 0 2-2v-10M6.400 7.200v5M9.600 7.200v5"/></svg></div>
<div class="tr" style="top:468px"><span style="left:12.500px">1019</span><a style="left:92px">项目质量表</a><span style="left:575px">system</span><span style="left:658px">项目</span><span class="d">列出项目的需求总数，完成需求数</span><svg style="left:978px" width="16" height="16" viewBox="0 0 16 16"><path d="M8.600 1.200H3a2 2 0 0 0-2 2v9.600a2 2 0 0 0 2 2h9.600a2 2 0 0 0 2-2V6.800"/><path d="M6.400 9.600 15 1.200"/></svg><svg style="left:1002px" width="16" height="16" viewBox="0 0 16 16"><path d="M4.200.700.700 4.200 11.800 15.300 15.300 11.800z"/><path d="M3.400 2.900 4.700 4.200M5.200 1.900 6.500 3.200M10.900 11.800 12.200 13.100M12.200 10.200 13.500 11.500" stroke-width="1"/><path d="M11.800.700 15.300 4.200 4.700 14.800.600 15.400 1.200 11.300z" fill="#fff"/><path d="M1.400 11.300 4.700 14.600" stroke-width="1"/></svg><svg style="left:1026px" width="16" height="16" viewBox="0 0 16 16"><path d="M.600 3.400h14.800M5.600 3.200V1.600a1 1 0 0 1 1-1h2.800a1 1 0 0 1 1 1v1.600M2.400 3.600v10a2 2 0 0 0 2 2h7.200a2 2 0 0 0 2-2v-10M6.400 7.200v5M9.600 7.200v5"/></svg></div>
<div class="tr" style="top:504px"><span style="left:12.500px">1018</span><a style="left:92px">项目Bug指派给分布表</a><span style="left:575px">system</span><span style="left:658px">项目,测试</span><span class="d">按照项目统计Bug的指派给分布情况</span><svg style="left:978px" width="16" height="16" viewBox="0 0 16 16"><path d="M8.600 1.200H3a2 2 0 0 0-2 2v9.600a2 2 0 0 0 2 2h9.600a2 2 0 0 0 2-2V6.800"/><path d="M6.400 9.600 15 1.200"/></svg><svg style="left:1002px" width="16" height="16" viewBox="0 0 16 16"><path d="M4.200.700.700 4.200 11.800 15.300 15.300 11.800z"/><path d="M3.400 2.900 4.700 4.200M5.200 1.900 6.500 3.200M10.900 11.800 12.200 13.100M12.200 10.200 13.500 11.500" stroke-width="1"/><path d="M11.800.700 15.300 4.200 4.700 14.800.600 15.400 1.200 11.300z" fill="#fff"/><path d="M1.400 11.300 4.700 14.600" stroke-width="1"/></svg><svg style="left:1026px" width="16" height="16" viewBox="0 0 16 16"><path d="M.600 3.400h14.800M5.600 3.200V1.600a1 1 0 0 1 1-1h2.800a1 1 0 0 1 1 1v1.600M2.400 3.600v10a2 2 0 0 0 2 2h7.200a2 2 0 0 0 2-2v-10M6.400 7.200v5M9.600 7.200v5"/></svg></div>
<div class="tr" style="top:540px"><span style="left:12.500px">1017</span><a style="left:92px">项目Bug解决者分布表</a><span style="left:575px">system</span><span style="left:658px">项目,测试</span><span class="d">按照项目统计Bug的解决者分布情况</span><svg style="left:978px" width="16" height="16" viewBox="0 0 16 16"><path d="M8.600 1.200H3a2 2 0 0 0-2 2v9.600a2 2 0 0 0 2 2h9.600a2 2 0 0 0 2-2V6.800"/><path d="M6.400 9.600 15 1.200"/></svg><svg style="left:1002px" width="16" height="16" viewBox="0 0 16 16"><path d="M4.200.700.700 4.200 11.800 15.300 15.300 11.800z"/><path d="M3.400 2.900 4.700 4.200M5.200 1.900 6.500 3.200M10.900 11.800 12.200 13.100M12.200 10.200 13.500 11.500" stroke-width="1"/><path d="M11.800.700 15.300 4.200 4.700 14.800.600 15.400 1.200 11.300z" fill="#fff"/><path d="M1.400 11.300 4.700 14.600" stroke-width="1"/></svg><svg style="left:1026px" width="16" height="16" viewBox="0 0 16 16"><path d="M.600 3.400h14.800M5.600 3.200V1.600a1 1 0 0 1 1-1h2.800a1 1 0 0 1 1 1v1.600M2.400 3.600v10a2 2 0 0 0 2 2h7.200a2 2 0 0 0 2-2v-10M6.400 7.200v5M9.600 7.200v5"/></svg></div>
<div class="tr" style="top:576px"><span style="left:12.500px">1016</span><a style="left:92px">项目Bug创建者分布表</a><span style="left:575px">system</span><span style="left:658px">项目,测试</span><span class="d">按照项目统计Bug的创建者分布情况</span><svg style="left:978px" width="16" height="16" viewBox="0 0 16 16"><path d="M8.600 1.200H3a2 2 0 0 0-2 2v9.600a2 2 0 0 0 2 2h9.600a2 2 0 0 0 2-2V6.800"/><path d="M6.400 9.600 15 1.200"/></svg><svg style="left:1002px" width="16" height="16" viewBox="0 0 16 16"><path d="M4.200.700.700 4.200 11.800 15.300 15.300 11.800z"/><path d="M3.400 2.900 4.700 4.200M5.200 1.900 6.500 3.200M10.900 11.800 12.200 13.100M12.200 10.200 13.500 11.500" stroke-width="1"/><path d="M11.800.700 15.300 4.200 4.700 14.800.600 15.400 1.200 11.300z" fill="#fff"/><path d="M1.400 11.300 4.700 14.600" stroke-width="1"/></svg><svg style="left:1026px" width="16" height="16" viewBox="0 0 16 16"><path d="M.600 3.400h14.800M5.600 3.200V1.600a1 1 0 0 1 1-1h2.800a1 1 0 0 1 1 1v1.600M2.400 3.600v10a2 2 0 0 0 2 2h7.200a2 2 0 0 0 2-2v-10M6.400 7.200v5M9.600 7.200v5"/></svg></div>
<div class="abs" style="left:546px;top:0;width:1px;height:592px;background:#e6e9ef"></div>
<div class="abs" style="left:962px;top:0;width:1px;height:592px;background:#e6e9ef"></div>
</div>
<div class="abs" style="left:0;top:591px;width:1058px;height:37px;border-top:1px solid #e0e3ea">
<span class="pg" style="left:770px">共 42 项</span>
<span class="pg" style="left:829.500px;font-size:12px">每页 20 项</span>
<svg class="abs" style="left:892px;top:14px" width="10" height="6" viewBox="0 0 10 6" fill="none" stroke="#313c52" stroke-width="1.200" stroke-linecap="round" stroke-linejoin="round"><path d="M.8 5.200 5 1l4.200 4.200"/></svg>
<svg class="abs" style="left:923px;top:14.100px" width="8" height="8" viewBox="0 0 9 9" fill="none" stroke="#b4bac6" stroke-width="1.200" stroke-linecap="round" stroke-linejoin="round"><path d="M.8.800v7.400M8 .8 4.300 4.500 8 8.200"/></svg>
<svg class="abs" style="left:953px;top:14.100px" width="5.300" height="8" viewBox="0 0 6 9" fill="none" stroke="#b4bac6" stroke-width="1.200" stroke-linecap="round" stroke-linejoin="round"><path d="M5 .8 1.300 4.500 5 8.200"/></svg>
<span class="pg" style="left:972px">1/3</span>
<svg class="abs" style="left:1003.500px;top:14.100px" width="5.300" height="8" viewBox="0 0 6 9" fill="none" stroke="#313c52" stroke-width="1.200" stroke-linecap="round" stroke-linejoin="round"><path d="M1 .8 4.700 4.500 1 8.200"/></svg>
<svg class="abs" style="left:1030px;top:14.100px" width="8" height="8" viewBox="0 0 9 9" fill="none" stroke="#313c52" stroke-width="1.200" stroke-linecap="round" stroke-linejoin="round"><path d="M8.200.8v7.400M1 .8 4.700 4.500 1 8.200"/></svg>
</div>
</div>
</div>
<div id="mask"></div>
<div id="modal">
<div class="abs" style="left:32px;top:24px;line-height:20px;white-space:nowrap">创建透视表</div>
<svg class="abs" style="left:767.300px;top:23.300px" width="10.400" height="10.400" viewBox="0 0 11 11" fill="none" stroke="#4a5365" stroke-width="1.200" stroke-linecap="round"><path d="M.6.600l9.800 9.800M10.400.6.600 10.400"/></svg>
<div class="lb" style="top:76px"><i>*</i>所属分组</div>
<div class="inp" style="top:69px;height:34px"></div>
<svg class="abs" style="left:748.600px;top:84px" width="8.400" height="5.600" viewBox="0 0 9 6" fill="none" stroke="#313c52" stroke-width="1.200" stroke-linecap="round" stroke-linejoin="round"><path d="M.6.800 4.500 4.800 8.400.8"/></svg>
<div class="lb" style="top:124px"><i>*</i>名称</div>
<div class="tab on" style="left:129px;top:123.500px">简体</div>
<div class="tab" style="left:173px;top:123.500px">繁體</div>
<div class="tab" style="left:217px;top:123.500px">English</div>
<div class="tab" style="left:277.500px;top:123.500px">Deutsch</div>
<div class="tab" style="left:343.500px;top:123.500px">Français</div>
<div class="ul" style="top:148.500px"></div>
<div class="inp" style="top:159px;height:34px"></div>
<div class="lb" style="top:214px">描述</div>
<div class="tab on" style="left:129px;top:213.500px">简体</div>
<div class="tab" style="left:173px;top:213.500px">繁體</div>
<div class="tab" style="left:217px;top:213.500px">English</div>
<div class="tab" style="left:277.500px;top:213.500px">Deutsch</div>
<div class="tab" style="left:343.500px;top:213.500px">Français</div>
<div class="ul" style="top:238.500px"></div>
<div class="inp" style="top:249px;height:70px"></div>
<svg class="abs" style="left:761px;top:312px" width="5" height="5" viewBox="0 0 6 6" stroke="#b0b5bf" stroke-width=".8"><path d="M5.500 1 1 5.500M5.500 3.500 3.500 5.500"/></svg>
<div class="abs" style="left:351px;top:357px;width:98px;height:34px;border-radius:3px;background:#3a84fa;color:#fff;text-align:center;line-height:33px;font-weight:500">保存</div>
</div>
<div id="ft">
<div class="abs" style="left:14px;top:10px;width:18px;height:18px;border-radius:4.500px;background:#3a84fa"></div>
<svg class="abs" style="left:17px;top:13px" width="12" height="12" viewBox="0 0 12 12" fill="none" stroke="#fff" stroke-width="1" stroke-linecap="round" stroke-linejoin="round"><rect x=".8" y="1.600" width="10.600" height="6" rx="1" stroke-opacity=".85"/><path d="M6.100 7.800v2.200M3.800 10.100h4.600" stroke-opacity=".85"/><path d="M4.800 3.300 3.500 4.600l1.300 1.300M7.400 3.300l1.300 1.300-1.300 1.300" stroke-width=".9"/></svg>
<div class="abs" style="left:38px;top:1px;line-height:36px;white-space:nowrap;color:#313c52">IPD研发管理界面</div>
<svg class="abs" style="left:144px;top:16px" width="9" height="6" viewBox="0 0 9 6" fill="none" stroke="#313c52" stroke-width="1.200" stroke-linecap="round" stroke-linejoin="round"><path d="M.8 5 4.500 1.200 8.200 5"/></svg>
<svg class="abs" style="left:162px;top:0" width="10" height="36" viewBox="0 0 10 36" fill="none" stroke="#eaecf1" stroke-width="1"><path d="M.5 0 9 18 .5 36"/></svg>
<div class="abs" style="left:189px;top:1px;line-height:36px;color:#8b91a0">地盘</div>
<div class="abs" style="left:231px;top:11.500px;width:1px;height:15px;background:#dfe2e8"></div>
<div class="abs" style="left:247px;top:1px;line-height:36px;font-weight:bold;color:#1d2432">BI</div>
<div class="abs" style="left:276px;top:11.500px;width:1px;height:15px;background:#dfe2e8"></div>
<div class="abs" style="left:292px;top:1px;line-height:36px;color:#8b91a0">产品</div>
<div class="abs" style="left:940px;top:4px;width:178px;height:30px;border:1px solid #c9d2ea;border-radius:15px"></div>
<svg class="abs" style="left:950px;top:12px" width="13" height="13" viewBox="0 0 13 13" fill="none" stroke="#3a84fa" stroke-width="1.400" stroke-linecap="round"><circle cx="5.200" cy="5.200" r="4.200"/><path d="M8.400 8.400 12 12"/></svg>
<div class="abs" style="left:973px;top:1px;line-height:36px;color:#6b7385">搜索</div>
<svg class="abs" style="left:1124px;top:7px" width="32" height="24" viewBox="0 0 32 24"><defs><linearGradient id="gai" x1="0" y1="1" x2="1" y2="0"><stop offset="0" stop-color="#2a7bff"/><stop offset="1" stop-color="#70cdff"/></linearGradient></defs><path d="M1.200 8.600a3.600 3.600 0 0 1 3.600-3.600H19.400a3.600 3.600 0 0 1 3.600 3.600v6.400a3.600 3.600 0 0 1-3.600 3.600H10.500c-2.800.2-5.200 1.200-7.400 2.800-.9.600-1.900.2-1.900-.9z" fill="url(#gai)"/><circle cx="7" cy="12.300" r="1" fill="#fff"/><circle cx="11.700" cy="12.300" r="1" fill="#fff"/><circle cx="16.500" cy="12.300" r="1" fill="#fff"/><text x="19.200" y="9.300" font-size="10.200" font-weight="bold" font-family="Liberation Sans, sans-serif" fill="#459afb" stroke="#fff" stroke-width="2.200" paint-order="stroke" textLength="10.200" lengthAdjust="spacingAndGlyphs">AI</text></svg>
<svg class="abs" style="left:1165px;top:7px" width="24.400" height="24.400" viewBox="0 0 24 24"><circle cx="12" cy="12" r="12" fill="#55a0fa"/><path d="M21.500 6.400C21.400 10.600 18.200 11.600 15 9.400 11.400 6.800 6.600 7.400 4.900 11.400 3.300 15.400 5.600 20.200 10.600 21.200c4.800.9 8.700-2.600 7.600-6.600-.7-2.600-4.300-3.700-6.500-1.900-1.700 1.400-1.100 4.200.9 4.700" fill="none" stroke="#fff" stroke-width="2.900" stroke-linecap="round"/><path d="M4.600 9.400C3.600 11.400 3.500 13.600 4.200 15.600" fill="none" stroke="#55a0fa" stroke-width="1.200" stroke-linecap="round"/></svg>
<div class="abs" style="left:1195px;top:1px;line-height:36px;white-space:nowrap;color:#313c52">IPD版2.1.0</div>
</div>
<svg id="anno" class="abs" style="left:0;top:0;z-index:40" width="1366" height="768" viewBox="0 0 1366 768">
<rect x="1236.300" y="52.800" width="121.200" height="52.200" fill="none" stroke="#ee1c2a" stroke-width="1.800"/>
<path d="M1225.600 100 1131 141.600" stroke="#ee1c2a" stroke-width="1.900" stroke-linecap="round" fill="none"/>
<path d="M1124.200 144.700 1131.200 137.500 1134.300 145z" fill="#ee1c2a"/>
</svg>

</body>
</html>
